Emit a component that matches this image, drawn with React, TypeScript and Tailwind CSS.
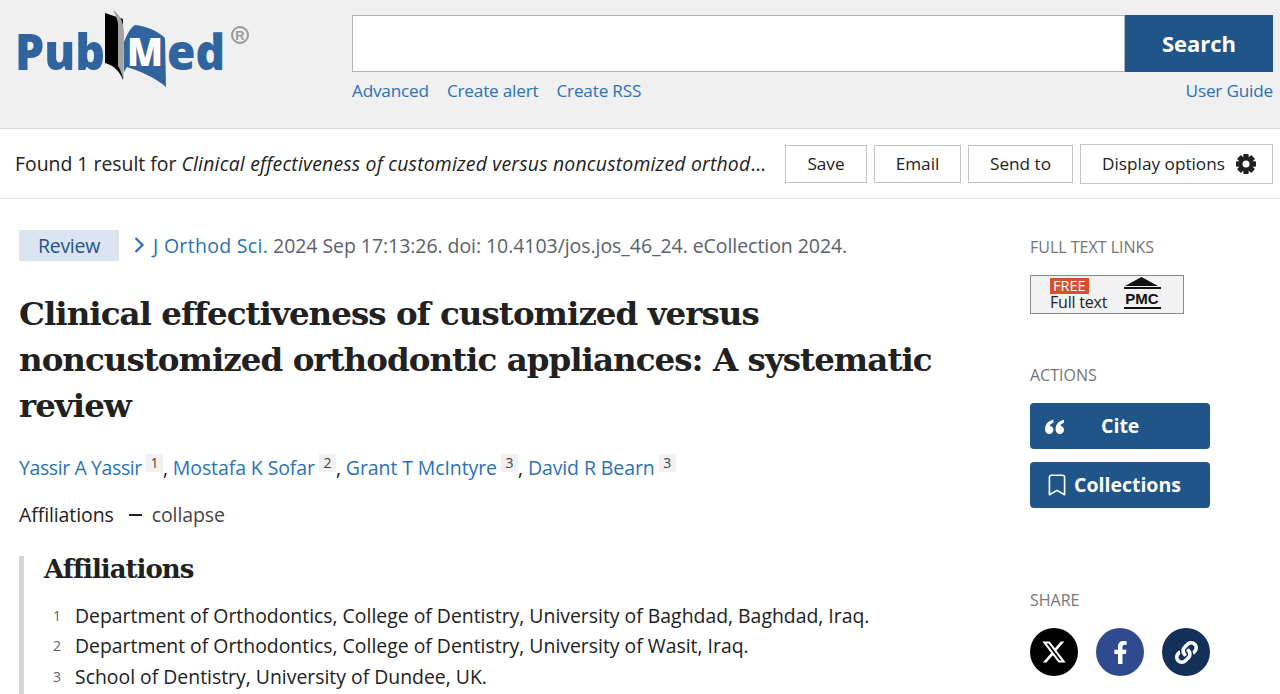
import React from "react";
import { FaFacebookF, FaLink } from "react-icons/fa";
import { FaXTwitter } from "react-icons/fa6";
import { Bookmark } from "lucide-react";

const sans = "font-['Open_Sans','Noto_Sans',sans-serif]";
const serif = "font-['DejaVu_Serif','Liberation_Serif',serif]";

function Logo() {
  const f = "'Open Sans',sans-serif";
  return (
    <svg width="240" height="90" viewBox="0 0 240 90" className="block">
      <text x="15" y="70" fontFamily={f} fontWeight="800" fontSize="50" fill="#30649f" textLength="90" lengthAdjust="spacingAndGlyphs">Pub</text>
      <path d="M105 13 L123 19 L123 80 C120 72 115 66 105 63 Z" fill="#000" />
      <path d="M113 10 C119 14 123 20 124 32 L123.500 80 C122 74 120 69 118 66 L118 24 C117 18 115 14 113 10 Z" fill="#a3a3a3" />
      <path d="M124 42 C127 34 131 27 135 25 C146 26 158 31 165 38 L166 87 C156 78 140 71 127 67 L124 72 Z" fill="#30649f" />
      <text x="127" y="66" fontFamily={f} fontWeight="800" fontSize="39" fill="#fff" textLength="36" lengthAdjust="spacingAndGlyphs">M</text>
      <text x="167" y="70" fontFamily={f} fontWeight="800" fontSize="50" fill="#30649f" textLength="58" lengthAdjust="spacingAndGlyphs">ed</text>
    </svg>
  );
}

function Registered() {
  return (
    <svg width="20" height="20" viewBox="0 0 20 20" className="block">
      <circle cx="10" cy="10" r="8" fill="none" stroke="#999" strokeWidth="2" />
      <text x="10" y="15" textAnchor="middle" fontFamily="'Liberation Sans',sans-serif" fontWeight="700" fontSize="13" fill="#999">R</text>
    </svg>
  );
}

function Gear() {
  return (
    <svg width="22" height="22" viewBox="0 0 22 22" className="block" fill="#212121">
      {[0, 45, 90, 135].map((a) => (
        <rect key={a} x="8.300" y="1" width="5.400" height="20" rx="0.800" transform={`rotate(${a} 11 11)`} />
      ))}
      <circle cx="11" cy="11" r="7" />
      <circle cx="11" cy="11" r="3.500" fill="#fff" />
    </svg>
  );
}

function ToolButton({ children, w }: { children: React.ReactNode; w: string }) {
  return (
    <div className={`flex items-center justify-center gap-[10px] border border-[#c4c4c4] text-[17.2px] text-[#212121] ${w}`}>
      {children}
    </div>
  );
}

function Sup({ n }: { n: string }) {
  return (
    <span className="ml-[4px] inline-flex h-[18px] w-[17px] -translate-y-[5px] items-center justify-center bg-[#f1f1f1] text-[14px] leading-none text-[#444]">
      {n}
    </span>
  );
}

function Aff({ n, t }: { n: string; t: string }) {
  return (
    <div className="flex h-[30.5px] items-center">
      <span className="w-[31px] pl-[9px] text-[14px] text-[#5b616b]">{n}</span>
      <span className="text-[19.4px] text-[#212121]">{t}</span>
    </div>
  );
}

function Label({ children }: { children: React.ReactNode }) {
  return <div className="text-[16px] leading-[20px] text-[#757575]">{children}</div>;
}

function ActionBtn({ children }: { children: React.ReactNode }) {
  return (
    <div className="flex h-[46px] w-[180px] items-center rounded-[4px] bg-[#20558a] text-[19.5px] font-bold text-white">
      {children}
    </div>
  );
}

export default function App() {
  return (
    <div className={`h-[694px] w-[1280px] overflow-hidden bg-white ${sans}`}>
      <header className="flex h-[129px] border-b border-[#d9d9d9] bg-[#f0f0f0]">
        <div className="relative w-[352px] shrink-0">
          <Logo />
          <div className="absolute left-[230px] top-[25px]"><Registered /></div>
        </div>
        <div className="flex w-[921px] flex-col pt-[15px]">
          <div className="flex h-[57px]">
            <div className="grow border border-[#b3b3b3] bg-white" />
            <div className="flex w-[148px] items-center justify-center bg-[#20558a] text-[22px] font-bold text-white">Search</div>
          </div>
          <div className="mt-[7px] flex text-[17.2px] leading-[24px] tracking-[-0.2px] text-[#2a72b5]">
            <span>Advanced</span>
            <span className="ml-[18px]">Create alert</span>
            <span className="ml-[18px]">Create RSS</span>
            <span className="ml-auto">User Guide</span>
          </div>
        </div>
      </header>

      <div className="flex h-[70px] items-center border-b border-[#e2e2e2] pl-[15px] pr-[7px]">
        <div className="w-[756px] truncate text-[19.4px] text-[#212121]">
          Found 1 result for <em className="tracking-[0.2px]">Clinical effectiveness of customized versus noncustomized orthodontic appliances: A systematic review</em>
        </div>
        <div className="ml-auto flex items-center gap-[7px]">
          <ToolButton w="h-[38px] w-[82px]">Save</ToolButton>
          <ToolButton w="h-[38px] w-[87px]">Email</ToolButton>
          <ToolButton w="h-[38px] w-[105px]">Send to</ToolButton>
          <ToolButton w="h-[40px] w-[193px] pl-[6px]">Display options <Gear /></ToolButton>
        </div>
      </div>

      <main className="flex pl-[19px]">
        <div className="w-[1011px] shrink-0">
          <div className="mt-[31px] flex h-[31px] items-center text-[19.5px] tracking-[-0.06px]">
            <span className="flex h-[31px] w-[100px] items-center justify-center bg-[#dbe4f0] tracking-[-0.3px] text-[#20558a]">Review</span>
            <svg width="11" height="16" viewBox="0 0 11 16" className="ml-[15px] mt-[-2px] block" fill="none" stroke="#2a72b5" strokeWidth="2.200">
              <path d="M1.500 1 L8.500 8 L1.500 15" />
            </svg>
            <span className="ml-[8px] tracking-[0.3px] text-[#2a72b5]">J Orthod Sci.</span>
            <span className="ml-[5px] text-[#5b616b]">2024 Sep 17:13:26. doi: 10.4103/jos.jos_46_24. eCollection 2024.</span>
          </div>
          <h1 className={`mt-[30px] w-[960px] text-[32.5px] font-bold leading-[46px] tracking-[-0.97px] text-[#212121] ${serif}`}>
            Clinical effectiveness of customized versus noncustomized orthodontic appliances: A systematic review
          </h1>
          <div className="mt-[24px] flex h-[30px] items-center text-[19.5px] tracking-[-0.1px] text-[#2a72b5]">
            <span className="tracking-[-0.4px]">Yassir A Yassir</span><Sup n="1" /><span className="text-[#212121]">,&nbsp;</span>
            <span>Mostafa K Sofar</span><Sup n="2" /><span className="text-[#212121]">,&nbsp;</span>
            <span>Grant T McIntyre</span><Sup n="3" /><span className="text-[#212121]">,&nbsp;</span>
            <span>David R Bearn</span><Sup n="3" />
          </div>
          <div className="mt-[17px] flex h-[30px] items-center text-[19.5px] tracking-[-0.1px]">
            <span className="text-[#212121]">Affiliations</span>
            <span className="ml-[15px] h-[2px] w-[13px] bg-[#212121]" />
            <span className="ml-[10px] text-[#444]">collapse</span>
          </div>
          <div className="mt-[26px] border-l-[5px] border-[#d6d6d6] pb-[10px] pl-[20px]">
            <h3 className={`h-[26px] text-[26px] font-bold leading-[26px] tracking-[-1px] text-[#212121] ${serif}`}>Affiliations</h3>
            <div className="mt-[18px]">
              <Aff n="1" t="Department of Orthodontics, College of Dentistry, University of Baghdad, Baghdad, Iraq." />
              <Aff n="2" t="Department of Orthodontics, College of Dentistry, University of Wasit, Iraq." />
              <Aff n="3" t="School of Dentistry, University of Dundee, UK." />
            </div>
          </div>
        </div>

        <aside className="w-[180px] shrink-0 pt-[38px]">
          <Label>FULL TEXT LINKS</Label>
          <div className="mt-[18px] flex h-[39px] w-[154px] border border-[#8a8a8a] bg-[#f2f2f2]">
            <div className="ml-[19px] flex w-[64px] flex-col items-start pt-[2px]">
              <span className="bg-[#d4512a] px-[3px] text-[14.500px] leading-[16px] text-white">FREE</span>
              <span className="text-[16px] leading-[17px] tracking-[-0.2px] text-[#222]">Full text</span>
            </div>
            <svg width="40" height="36" viewBox="0 0 40 36" className="ml-[8px] block">
              <path d="M19.500 1 L36 10 H3 Z" fill="#111" />
              <rect x="2" y="11" width="37" height="2" fill="#111" />
              <text x="20" y="28" textAnchor="middle" fontFamily="'Liberation Sans',sans-serif" fontWeight="700" fontSize="15" fill="#111">PMC</text>
              <rect x="2" y="31" width="37" height="2" fill="#111" />
            </svg>
          </div>

          <div className="mt-[51px]"><Label>ACTIONS</Label></div>
          <div className="mt-[18px] flex flex-col gap-[13px]">
            <ActionBtn>
              <svg width="19" height="15" viewBox="0 0 18 14" className="ml-[15px] block" fill="#fff">
                <path d="M8 .5 C3 1.500 0 5 0 9.500 C0 12 1.800 14 4 14 C6.200 14 8 12.300 8 10 C8 7.800 6.300 6.500 4.600 6.500 C5 5 6.200 4 8 3.500 Z" />
                <path d="M18 .5 C13 1.500 10 5 10 9.500 C10 12 11.800 14 14 14 C16.200 14 18 12.300 18 10 C18 7.800 16.300 6.500 14.600 6.500 C15 5 16.200 4 18 3.500 Z" />
              </svg>
              <span className="ml-[37px]">Cite</span>
            </ActionBtn>
            <ActionBtn>
              <Bookmark className="ml-[14px]" size={26} strokeWidth={1.500} />
              <span className="ml-[4px]">Collections</span>
            </ActionBtn>
          </div>

          <div className="mt-[82px]"><Label>SHARE</Label></div>
          <div className="mt-[18px] flex justify-between">
            <div className="flex h-[48px] w-[48px] items-center justify-center rounded-full bg-black text-white"><FaXTwitter size={26} /></div>
            <div className="flex h-[48px] w-[48px] items-center justify-center rounded-full bg-[#2f4a8f] text-white"><FaFacebookF size={23} /></div>
            <div className="flex h-[48px] w-[48px] items-center justify-center rounded-full bg-[#123058] text-white"><FaLink size={23} /></div>
          </div>
        </aside>
      </main>
    </div>
  );
}
